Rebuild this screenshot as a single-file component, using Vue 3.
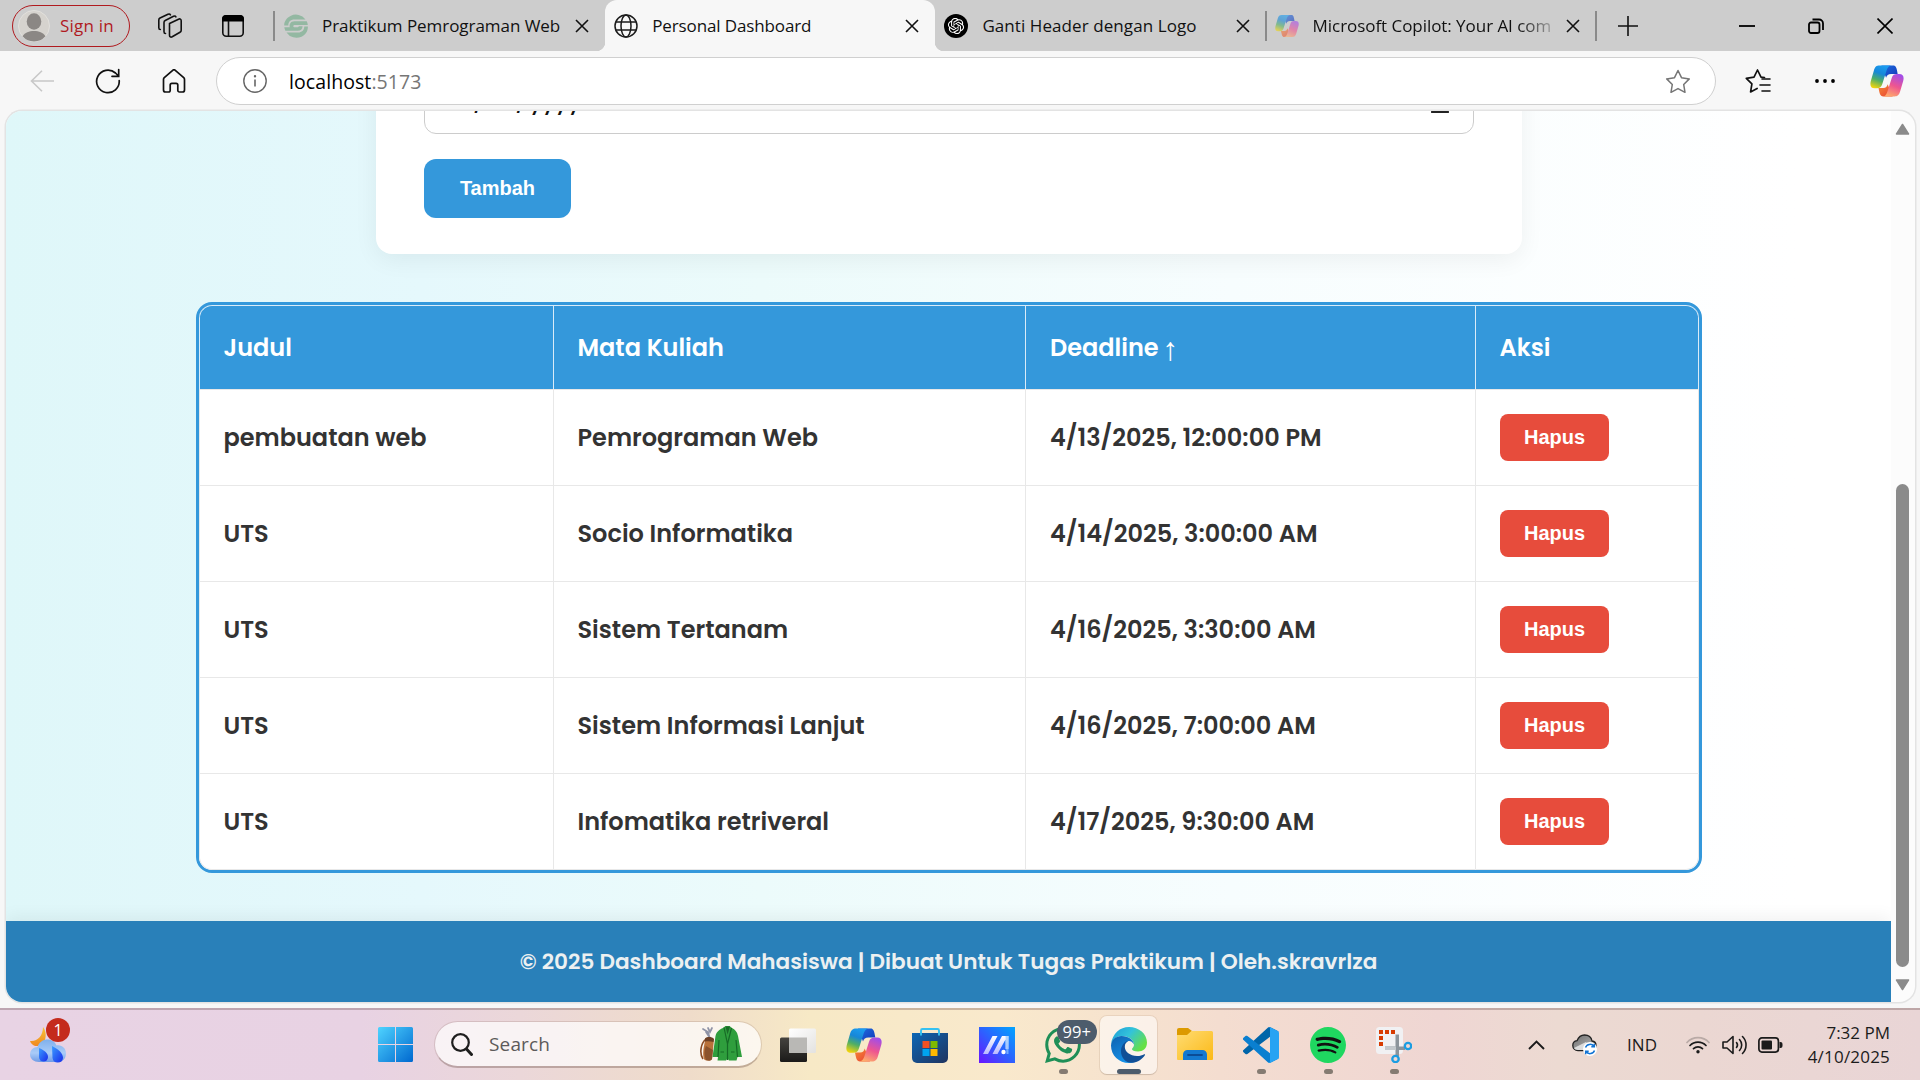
<script setup>
const tabs = [
  { title: 'Praktikum Pemrograman Web', icon: 'praktikum' },
  { title: 'Personal Dashboard', icon: 'globe', active: true },
  { title: 'Ganti Header dengan Logo', icon: 'knot', wide: true },
  { title: 'Microsoft Copilot: Your AI com', icon: 'copilot', faded: true, divider: true }
]

const headers = ['Judul', 'Mata Kuliah', 'Deadline', 'Aksi']

const tasks = [
  { judul: 'pembuatan web', matkul: 'Pemrograman Web', deadline: '4/13/2025, 12:00:00 PM' },
  { judul: 'UTS', matkul: 'Socio Informatika', deadline: '4/14/2025, 3:00:00 AM' },
  { judul: 'UTS', matkul: 'Sistem Tertanam', deadline: '4/16/2025, 3:30:00 AM' },
  { judul: 'UTS', matkul: 'Sistem Informasi Lanjut', deadline: '4/16/2025, 7:00:00 AM' },
  { judul: 'UTS', matkul: 'Infomatika retriveral', deadline: '4/17/2025, 9:30:00 AM' }
]
</script>

<template>
  <div class="desktop">
    <svg class="sprite" aria-hidden="true">
      <defs>
        <linearGradient id="cpA" x1=".6" y1="0" x2=".25" y2="1">
          <stop offset="0" stop-color="#1a9cf0" /><stop offset=".35" stop-color="#1787d8" />
          <stop offset=".65" stop-color="#4fae66" /><stop offset="1" stop-color="#f0d40c" />
        </linearGradient>
        <linearGradient id="cpB" x1="0" y1="0" x2="1" y2="1">
          <stop offset="0" stop-color="#1d6fe0" /><stop offset="1" stop-color="#1336b8" />
        </linearGradient>
        <linearGradient id="cpC" x1=".7" y1="0" x2=".3" y2="1">
          <stop offset="0" stop-color="#a24de8" /><stop offset=".5" stop-color="#ee5590" />
          <stop offset="1" stop-color="#ffae6a" />
        </linearGradient>
        <linearGradient id="cpD" x1="0" y1="0" x2="1" y2="1">
          <stop offset="0" stop-color="#f58a35" /><stop offset="1" stop-color="#e83f35" />
        </linearGradient>
        <linearGradient id="win" x1="0" y1="0" x2="1" y2="1">
          <stop offset="0" stop-color="#4fd4ff" /><stop offset="1" stop-color="#0068cf" />
        </linearGradient>
        <linearGradient id="store" x1="0" y1="0" x2="1" y2="1">
          <stop offset="0" stop-color="#0c66b5" /><stop offset="1" stop-color="#20345f" />
        </linearGradient>
        <linearGradient id="asus" x1="0" y1="1" x2="1" y2="0">
          <stop offset="0" stop-color="#6a14ff" /><stop offset=".5" stop-color="#2c62ff" /><stop offset="1" stop-color="#00a5ff" />
        </linearGradient>
        <linearGradient id="asusM" x1="0" y1="0" x2="0" y2="1">
          <stop offset="0" stop-color="#fff" /><stop offset="1" stop-color="#b9b8ff" />
        </linearGradient>
        <linearGradient id="edTop" x1="0" y1="0" x2="1" y2=".6">
          <stop offset="0" stop-color="#1c9ad8" /><stop offset=".5" stop-color="#33c3da" /><stop offset="1" stop-color="#66e045" />
        </linearGradient>
        <linearGradient id="edMid" x1="0" y1="0" x2=".5" y2="1">
          <stop offset="0" stop-color="#0f62b0" /><stop offset="1" stop-color="#1690e6" />
        </linearGradient>
        <linearGradient id="folder" x1="0" y1="0" x2="1" y2="1">
          <stop offset="0" stop-color="#ffdc73" /><stop offset="1" stop-color="#fbb917" />
        </linearGradient>
        <linearGradient id="drop" x1="0" y1="0" x2="1" y2="1">
          <stop offset="0" stop-color="#3a9cff" /><stop offset="1" stop-color="#1a2bea" />
        </linearGradient>
        <linearGradient id="puff" x1="0" y1="0" x2="0" y2="1">
          <stop offset="0" stop-color="#7fb0ec" /><stop offset=".6" stop-color="#a9cbf8" /><stop offset="1" stop-color="#6f9be6" />
        </linearGradient>
        <linearGradient id="moon" x1="0" y1="0" x2="0" y2="1">
          <stop offset="0" stop-color="#f6c63a" /><stop offset="1" stop-color="#f0881f" />
        </linearGradient>
        <linearGradient id="tvDark" x1="0" y1="0" x2="0" y2="1">
          <stop offset="0" stop-color="#45433f" /><stop offset="1" stop-color="#1b1a19" />
        </linearGradient>
        <linearGradient id="tvLight" x1="0" y1="0" x2="1" y2="1">
          <stop offset="0" stop-color="#fff" /><stop offset="1" stop-color="#e3e2e0" />
        </linearGradient>
        <linearGradient id="cloudG" x1="0" y1="0" x2="1" y2="1">
          <stop offset="0" stop-color="#6d6d6d" /><stop offset="1" stop-color="#bdbdbd" />
        </linearGradient>
        <symbol id="copilot" viewBox="0 0 36 34">
          <path fill="url(#cpB)" d="M12 .5h12.500c3 0 3.800 2.500 4.800 9h-7c-3 0-4.500 1.500-5.300 4z" />
          <path fill="url(#cpD)" d="M9 24.500h5c3 0 4-1.500 4.700-4l5.300 13H14c-3.500 0-4-4-5-9z" />
          <path fill="url(#cpA)" d="M10 .5h13.500c-4 0-5 2.500-6.300 6.500l-4.300 13.500c-1 3-2.500 4.300-5.500 4.300H5C.5 24.800-.3 21.500.8 17L4 6C5.200 1.800 6.800.5 10 .5z" />
          <path fill="url(#cpC)" d="M26 33.500H12.500c4 0 5-2.500 6.300-6.500l4.300-13.500c1-3 2.500-4 5.500-4H31c4.500 0 5.300 3.300 4.200 7.500L32 28c-1.200 4.200-2.800 5.500-6 5.500z" />
        </symbol>
        <symbol id="globe" viewBox="0 0 24 24">
          <g fill="none" stroke="#1b1b1b" stroke-width="1.500">
            <circle cx="12" cy="12" r="11" /><ellipse cx="12" cy="12" rx="5" ry="11" />
            <path d="M2 8h20M2 16h20" />
          </g>
        </symbol>
        <symbol id="praktikum" viewBox="0 0 24 24">
          <g fill="#93b8a2">
            <path d="M6.500 2A11.700 11.700 0 0 1 21.500 5.400H10.500C6.500 5.400 4.300 7.500 4.300 11.500H.2C.2 7 3 3.500 6.500 2z" />
            <path d="M10.500 7.200h12.200c.6 1.200 1 2.500 1.100 3.800H11c-1.200 0-1.700.5-1.700 1.200 0 .6.500 1 1.400 1h2.500c1 0 1.500-.5 1.700-1h3.700c-.2 3-2 4.600-5 4.600H1.400A12 12 0 0 1 .3 13.200h5.500c-.8-3 .8-6 4.700-6z" />
            <path d="M2.500 18.500H14c4 0 6.200-2.300 6.300-6h3.600C24 17 21.500 21 17.500 22.700A12 12 0 0 1 2.500 18.500z" />
          </g>
        </symbol>
        <symbol id="knot" viewBox="0 0 24 24">
          <circle cx="12" cy="12" r="12" fill="#000" />
          <path fill="#fff" transform="translate(3.900 3.900) scale(.675)" d="M22.2819 9.8211a5.9847 5.9847 0 0 0-.5157-4.9108 6.0462 6.0462 0 0 0-6.5098-2.9A6.0651 6.0651 0 0 0 4.9807 4.1818a5.9847 5.9847 0 0 0-3.9977 2.9 6.0462 6.0462 0 0 0 .7427 7.0966 5.98 5.98 0 0 0 .511 4.9107 6.051 6.051 0 0 0 6.5146 2.9001A5.9847 5.9847 0 0 0 13.2599 24a6.0557 6.0557 0 0 0 5.7718-4.2058 5.9894 5.9894 0 0 0 3.9977-2.9001 6.0557 6.0557 0 0 0-.7475-7.0729zm-9.022 12.6081a4.4755 4.4755 0 0 1-2.8764-1.0408l.1419-.0804 4.7783-2.7582a.7948.7948 0 0 0 .3927-.6813v-6.7369l2.02 1.1686a.071.071 0 0 1 .038.052v5.5826a4.504 4.504 0 0 1-4.4945 4.4944zm-9.6607-4.1254a4.4708 4.4708 0 0 1-.5346-3.0137l.142.0852 4.783 2.7582a.7712.7712 0 0 0 .7806 0l5.8428-3.3685v2.3324a.0804.0804 0 0 1-.0332.0615L9.74 19.9502a4.4992 4.4992 0 0 1-6.1408-1.6464zM2.3408 7.8956a4.485 4.485 0 0 1 2.3655-1.9728V11.6a.7664.7664 0 0 0 .3879.6765l5.8144 3.3543-2.0201 1.1685a.0757.0757 0 0 1-.071 0l-4.8303-2.7865A4.504 4.504 0 0 1 2.3408 7.872zm16.5963 3.8558L13.1038 8.364 15.1192 7.2a.0757.0757 0 0 1 .071 0l4.8303 2.7913a4.4944 4.4944 0 0 1-.6765 8.1042v-5.6772a.79.79 0 0 0-.407-.667zm2.0107-3.0231l-.142-.0852-4.7735-2.7818a.7759.7759 0 0 0-.7854 0L9.409 9.2297V6.8974a.0662.0662 0 0 1 .0284-.0615l4.8303-2.7866a4.4992 4.4992 0 0 1 6.6802 4.66zM8.3065 12.863l-2.02-1.1638a.0804.0804 0 0 1-.038-.0567V6.0742a4.4992 4.4992 0 0 1 7.3757-3.4537l-.142.0805L8.704 5.459a.7948.7948 0 0 0-.3927.6813zm1.0976-2.3654l2.602-1.4998 2.6069 1.4998v2.9994l-2.5974 1.4997-2.6067-1.4997Z" />
        </symbol>
      </defs>
    </svg>

    <!-- Browser title bar -->
    <header class="titlebar">
      <div class="signin">
        <svg width="32" height="32" viewBox="0 0 32 32">
          <circle cx="16" cy="16" r="15.500" fill="#d6d3ce" stroke="#e2e0dc" />
          <ellipse cx="16" cy="11.500" rx="7.300" ry="8.300" fill="#8b8784" />
          <path d="M4.500 26.300C7 22.500 11 21 16 21s9 1.500 11.500 5.300A15.500 15.500 0 0 1 16 31.500 15.500 15.500 0 0 1 4.500 26.300z" fill="#8b8784" />
        </svg>
        <span>Sign in</span>
      </div>
      <svg class="tool-a" width="26" height="26" viewBox="0 0 26 26" fill="none" stroke="#111" stroke-width="1.600" stroke-linejoin="round" stroke-linecap="round">
        <path d="M12.500 10.500l9-4.300c1.500-.7 2.700 0 2.700 1.500v9.500c0 1-.4 1.600-1.200 2l-7.800 4.600c-1.500.8-2.700 0-2.700-1.500z" />
        <path d="M8.500 20.500c-1 0-1.500-.6-1.500-1.700V9.500c0-1 .4-1.600 1.200-2l8.300-4.200c1-.4 2-.2 2.400.6" />
        <path d="M3.300 16.500c-1 0-1.500-.6-1.500-1.700V7c0-1 .4-1.600 1.200-2l8-3.800c1-.4 2-.2 2.400.6" />
      </svg>
      <svg class="tool-b" width="22" height="22" viewBox="0 0 22 22">
        <rect x=".8" y=".8" width="20.400" height="20.400" rx="3.500" fill="none" stroke="#111" stroke-width="1.600" />
        <path d="M0 6.500V4a4 4 0 0 1 4-4h14a4 4 0 0 1 4 4v2.500z" fill="#000" />
        <path d="M6.500 6v15" stroke="#111" stroke-width="1.600" />
      </svg>
      <i class="sep"></i>
      <div v-for="t in tabs" :key="t.title" class="tab" :class="{ active: t.active, faded: t.faded, wide: t.wide }">
        <svg class="favicon"><use :href="'#' + t.icon" /></svg>
        <span class="tab-title">{{ t.title }}</span>
        <svg class="close" viewBox="0 0 14 14"><path d="M1 1l12 12M13 1L1 13" stroke="#111" stroke-width="1.600" /></svg>
        <i v-if="t.divider" class="divider"></i>
      </div>
      <i class="sep end"></i>
      <svg class="plus" width="20" height="20" viewBox="0 0 20 20"><path d="M10 0v20M0 10h20" stroke="#111" stroke-width="1.600" /></svg>
      <div class="window-buttons">
        <svg width="16" height="16" viewBox="0 0 16 16"><path d="M0 8h16" stroke="#000" stroke-width="1.800" /></svg>
        <svg width="16" height="16" viewBox="0 0 16 16" fill="none" stroke="#000" stroke-width="1.800">
          <rect x="1" y="4.500" width="10.500" height="10.500" rx="2" /><path d="M4.500 1.500H11a4 4 0 0 1 4 4V12" />
        </svg>
        <svg width="16" height="16" viewBox="0 0 16 16"><path d="M.5.5l15 15M15.500.5l-15 15" stroke="#000" stroke-width="1.600" /></svg>
      </div>
    </header>

    <!-- Address bar -->
    <div class="toolbar">
      <svg width="24" height="22" viewBox="0 0 24 22" fill="none" stroke="#c8c8c8" stroke-width="1.600"><path d="M24 11H1.500M12 .7L1.500 11 12 21.300" /></svg>
      <svg class="nav" width="26" height="26" viewBox="0 0 26 26" fill="none" stroke="#111" stroke-width="1.700" stroke-linecap="round">
        <path d="M24.200 12.500A11.300 11.300 0 1 1 20.500 5L23.500 8M23.700 1.500V8.300H17" />
      </svg>
      <svg class="nav" width="24" height="24" viewBox="0 0 24 24" fill="none" stroke="#111" stroke-width="1.700" stroke-linejoin="round">
        <path d="M1.500 10.500c0-.8.300-1.300.8-1.800L10.700 1.300a2 2 0 0 1 2.600 0l8.400 7.400c.5.500.8 1 .8 1.800V21c0 1.200-.8 2-2 2h-3c-1 0-1.700-.8-1.700-1.700V16c0-1-.7-1.700-1.700-1.700h-4.200c-1 0-1.700.7-1.700 1.700v5.300c0 .9-.7 1.700-1.700 1.700h-3c-1.200 0-2-.8-2-2z" />
      </svg>
      <div class="address">
        <svg width="24" height="24" viewBox="0 0 24 24"><circle cx="12" cy="12" r="11.200" fill="none" stroke="#666" stroke-width="1.400" /><path d="M12 10.500v7" stroke="#666" stroke-width="1.600" /><circle cx="12" cy="7.300" r="1.200" fill="#666" /></svg>
        <span class="url">localhost<em>:5173</em></span>
        <svg width="26" height="25" viewBox="0 0 26 25" fill="none" stroke="#757575" stroke-width="1.500" stroke-linejoin="round"><path d="M13 1.500l3.500 7.200 7.800 1.200-5.600 5.600 1.300 7.800L13 19.600l-7 3.700 1.300-7.800L1.700 9.900l7.800-1.200z" /></svg>
      </div>
      <svg class="favs" width="26" height="25" viewBox="0 0 26 25" fill="none" stroke="#111" stroke-width="1.700" stroke-linejoin="round" stroke-linecap="round">
        <path d="M19.500 8.500l-3.500-.3L12.500 1 9 8.200l-7.700 1.200 5.600 5.500-1.300 8 6.500-3.400" /><path d="M17 10h8M15 16h10M17 22h8" stroke-width="1.600" />
      </svg>
      <svg class="dots" width="22" height="6" viewBox="0 0 22 6"><circle cx="3" cy="3" r="1.900" /><circle cx="11" cy="3" r="1.900" /><circle cx="19" cy="3" r="1.900" /></svg>
      <svg class="copilot-btn" width="34" height="32"><use href="#copilot" /></svg>
    </div>

    <!-- Web page -->
    <div class="frame">
      <div class="viewport">
        <section class="form-card">
          <div class="date-input">
            <span>mm/</span><span class="day">dd/</span><span class="year">yyyy</span>
            <svg width="18" height="20" viewBox="0 0 18 20"><path d="M1 3h16v16H1zM1 7h16" fill="none" stroke="#222" stroke-width="1.800" /></svg>
          </div>
          <button class="add">Tambah</button>
        </section>

        <section class="table">
          <div class="row head">
            <div v-for="h in headers" :key="h" class="cell">
              {{ h }}<span v-if="h === 'Deadline'" class="arrow">↑</span>
            </div>
          </div>
          <div v-for="(t, i) in tasks" :key="i" class="row">
            <div class="cell">{{ t.judul }}</div>
            <div class="cell">{{ t.matkul }}</div>
            <div class="cell">{{ t.deadline }}</div>
            <div class="cell"><button class="delete">Hapus</button></div>
          </div>
        </section>

        <footer class="footer">© 2025 Dashboard Mahasiswa | Dibuat Untuk Tugas Praktikum | Oleh.skravrlza</footer>
      </div>
      <div class="scrollbar">
        <svg width="15" height="12" viewBox="0 0 15 12"><path d="M7.500 1.500L13.500 11h-12z" fill="#8b8b8b" stroke="#8b8b8b" stroke-width="1.500" stroke-linejoin="round" /></svg>
        <i class="thumb"></i>
        <svg width="15" height="12" viewBox="0 0 15 12"><path d="M7.500 10.500L13.500 1h-12z" fill="#8b8b8b" stroke="#8b8b8b" stroke-width="1.500" stroke-linejoin="round" /></svg>
      </div>
    </div>

    <!-- Taskbar -->
    <div class="taskbar">
      <div class="weather">
        <svg width="38" height="38" viewBox="0 0 38 38">
          <path d="M14 1c5 6 3 18-5 19-4 .5-7-2-8-5 7 1 13-5 13-14z" fill="url(#moon)" />
          <path d="M10 36c-5 0-9-3-9-7.500S4.500 21 8.500 21C10 16 14 13.500 18.500 13.500S26 16 27.500 19.500C33 18.500 37 22.500 37 27.500S33.500 36 28.500 36z" fill="url(#puff)" />
          <path d="M10 22c5 2 9 5 9 9a4.500 4.500 0 0 1-9 0z" fill="url(#drop)" /><path d="M23 20c6 3 11 7 11 12a5.300 5.300 0 0 1-10.500 0z" fill="url(#drop)" />
        </svg>
        <b>1</b>
      </div>
      <svg class="start" width="35" height="35" viewBox="0 0 35 35">
        <path fill="url(#win)" d="M1.500 0H17v17H0V1.500A1.500 1.500 0 0 1 1.500 0zM18 0h15.500A1.500 1.500 0 0 1 35 1.500V17H18zM0 18h17v17H1.500A1.500 1.500 0 0 1 0 33.500zM18 18h17v15.500a1.500 1.500 0 0 1-1.500 1.500H18z" />
      </svg>
      <div class="search">
        <svg width="22" height="23" viewBox="0 0 22 23" fill="none" stroke="#1e1e1e"><circle cx="9.500" cy="9.500" r="8.300" stroke-width="2.200" /><path d="M15.500 16l5 5.500" stroke-width="3" stroke-linecap="round" /></svg>
        <span>Search</span>
        <svg width="42" height="36" viewBox="0 0 42 36">
          <path d="M3 3l5 3 2 7M8 2l2 4 2-4M6 6l4 6" fill="none" stroke="#8f93a6" stroke-width="1.700" stroke-linecap="round" />
          <path d="M6 13C1 17-1 27 3 33" fill="none" stroke="#8a4b25" stroke-width="1.600" />
          <path d="M6 12l8 1-2 20c-1 2-7 2-8 0-2-5 0-15 2-21z" fill="#b9713a" /><path d="M5 12.500c2-2 7-2 9 .5l-.5 3c-3-1-6-1-8.500-.5z" fill="#6d4026" />
          <path d="M6 20c-2 4-2 10 0 14 3 1 5 1 6-1l1-9" fill="#8b522c" />
          <path d="M23 2l2.500-2h4L32 2c3 1.500 5 3.500 6 8l4 21h-4.500l-1 3.500H29l-1.500-2-1.500 2h-8.500l.5-3.500h-5.500L15.500 10c1-4.500 4-6.500 7.500-8z" fill="#2f9e3d" />
          <path d="M24 1.500l3.500 16.500L31.500 2M27.500 18v16M19 14l-1 17M36 14l1.500 17M20.500 26H24M31 26h3.500" fill="none" stroke="#166a26" stroke-width="1.200" />
          <path d="M25.500 .5h4.500l-2.500 8z" fill="#1b6a28" />
        </svg>
      </div>
      <div class="apps">
        <div class="app"><svg width="36" height="34" viewBox="0 0 36 34"><rect y="9.500" width="27" height="24.500" rx="1.500" fill="url(#tvDark)" /><rect x="9" y=".5" width="27" height="24.500" rx="1.500" fill="url(#tvLight)" /><path d="M9 9.500h18V25H10.500A1.500 1.500 0 0 1 9 23.500z" fill="#b9b8b5" /></svg></div>
        <div class="app"><svg width="36" height="34"><use href="#copilot" /></svg></div>
        <div class="app">
          <svg width="36" height="36" viewBox="0 0 36 36">
            <path d="M0 6h36v25a5 5 0 0 1-5 5H5a5 5 0 0 1-5-5z" fill="url(#store)" /><path d="M9 8.500V3.500A1.500 1.500 0 0 1 10.500 2h15A1.500 1.500 0 0 1 27 3.500v5" fill="none" stroke="#35c1f1" stroke-width="1.900" />
            <path d="M10.500 14h7v7h-7z" fill="#f25022" /><path d="M18.500 14h7v7h-7z" fill="#7fba00" /><path d="M10.500 22h7v7h-7z" fill="#00a4ef" /><path d="M18.500 22h7v7h-7z" fill="#ffb900" />
          </svg>
        </div>
        <div class="app">
          <svg width="36" height="36" viewBox="0 0 36 36"><rect width="36" height="36" fill="url(#asus)" /><path d="M4 27L13.500 9h5L9 27zM13.500 27L23 9h6.500v13h-3v-9.500L18.500 27z" fill="url(#asusM)" /><path d="M26.500 9h3v18h-2z" fill="#8fc4ff" opacity=".7" /><circle cx="24.500" cy="25" r="2.200" fill="#fff" /></svg>
        </div>
        <div class="app open">
          <svg width="36" height="36" viewBox="0 0 24 24"><path fill="#1f8f57" d="M17.472 14.382c-.297-.149-1.758-.867-2.03-.967-.273-.099-.471-.148-.67.15-.197.297-.767.966-.94 1.164-.173.199-.347.223-.644.075-.297-.15-1.255-.463-2.39-1.475-.883-.788-1.48-1.761-1.653-2.059-.173-.297-.018-.458.13-.606.134-.133.298-.347.446-.52.149-.174.198-.298.298-.497.099-.198.05-.371-.025-.52-.075-.149-.669-1.612-.916-2.207-.242-.579-.487-.5-.669-.51-.173-.008-.371-.01-.57-.01-.198 0-.52.074-.792.372-.272.297-1.04 1.016-1.04 2.479 0 1.462 1.065 2.875 1.213 3.074.149.198 2.096 3.2 5.077 4.487.709.306 1.262.489 1.694.625.712.227 1.36.195 1.871.118.571-.085 1.758-.719 2.006-1.413.248-.694.248-1.289.173-1.413-.074-.124-.272-.198-.57-.347m-5.421 7.403h-.004a9.87 9.87 0 01-5.031-1.378l-.361-.214-3.741.982.998-3.648-.235-.374a9.86 9.86 0 01-1.51-5.26c.001-5.45 4.436-9.884 9.888-9.884 2.64 0 5.122 1.03 6.988 2.898a9.825 9.825 0 012.893 6.994c-.003 5.45-4.437 9.884-9.885 9.884m8.413-18.297A11.815 11.815 0 0012.05 0C5.495 0 .16 5.335.157 11.892c0 2.096.547 4.142 1.588 5.945L.057 24l6.305-1.654a11.882 11.882 0 005.683 1.448h.005c6.554 0 11.89-5.335 11.893-11.893a11.821 11.821 0 00-3.48-8.413Z" /></svg>
          <b class="count">99+</b>
        </div>
        <div class="app open current">
          <svg width="36" height="36" viewBox="0 0 36 36">
            <path fill="url(#edTop)" d="M0 17C1.500 6.500 9 0 18 0c10 0 18 7 18 15.500 0 6-4 9-9 9-4 0-6-1.200-6-2.200 0-1.200 2-1.800 2-4.800-.5-4.500-5-8.500-12-8.500C6 9 2 12 0 17z" />
            <path fill="url(#edMid)" d="M0 18.500C.5 12.500 5 9 10.500 9c7 0 12 4 12.500 8.500-1.500-2.800-3.500-3.700-5.500-3.500C13 16 12 21 13 25c1.500 5 6 8.500 11 10-2 .8-4 1-6 1C8 36 0 28.500 0 18.500z" />
            <path fill="#114f96" d="M17 14c-4 1-7 5-7 10 0 7 5 12 11 11.800 6-.5 10.500-3.800 13-7.800.3-.7 0-1-.7-.8-2.300 1.300-4.800 1.900-7.300 1.800-7-.3-12-4-12.200-9-.1-3 1.200-5 3.200-6z" />
          </svg>
        </div>
        <div class="app">
          <svg width="36" height="34" viewBox="0 0 36 34"><path d="M0 2a2 2 0 0 1 2-2h9l4 3-4 5H0z" fill="#dc9a00" /><path d="M0 7h10l4.500-4H34.500A1.500 1.500 0 0 1 36 4.500V31a1 1 0 0 1-1 1H1a1 1 0 0 1-1-1z" fill="url(#folder)" /><path d="M6 32v-5.500a4.500 4.500 0 0 1 4.500-4.500h15a4.500 4.500 0 0 1 4.500 4.500V32z" fill="#1379d0" /><path d="M11 27h14" stroke="#0b4c96" stroke-width="1.800" stroke-linecap="round" /></svg>
        </div>
        <div class="app open">
          <svg width="36" height="36" viewBox="0 0 100 100">
            <path d="M96.500 10.800L75.900.9a6.200 6.200 0 0 0-7.100 1.200L1.400 63.600a4.200 4.200 0 0 0 0 6.200l5.500 5c1.500 1.400 3.700 1.500 5.300.3L93.400 13.500c2.700-2.100 6.600-.1 6.600 3.300v-.3c0-2.400-1.400-4.600-3.500-5.700z" fill="#0065a9" />
            <path d="M96.500 89.200l-20.600 9.900a6.200 6.200 0 0 1-7.100-1.200L1.400 36.400a4.200 4.200 0 0 1 0-6.200l5.500-5c1.500-1.400 3.700-1.500 5.300-.3l81.200 61.600c2.700 2.100 6.600.1 6.600-3.300v.3c0 2.400-1.400 4.600-3.500 5.700z" fill="#0a7fd0" />
            <path d="M75.900 99.100a6.200 6.200 0 0 1-7.100-1.200c2.300 2.300 6.200.7 6.200-2.600V4.700c0-3.300-3.900-4.900-6.200-2.600A6.200 6.200 0 0 1 75.900.9l20.600 9.900a6.200 6.200 0 0 1 3.500 5.600v67.200c0 2.400-1.400 4.600-3.500 5.600z" fill="#27a3f3" />
          </svg>
        </div>
        <div class="app open">
          <svg width="36" height="36" viewBox="0 0 24 24"><circle cx="12" cy="12" r="11" fill="#111" /><path fill="#1fd760" d="M12 0C5.400 0 0 5.400 0 12s5.400 12 12 12 12-5.400 12-12S18.660 0 12 0zm5.521 17.340c-.24.359-.66.480-1.021.240-2.820-1.740-6.360-2.101-10.561-1.141-.418.122-.779-.179-.899-.539-.12-.421.180-.780.540-.900 4.560-1.021 8.520-.600 11.640 1.320.420.180.479.659.301 1.020zm1.440-3.300c-.301.420-.841.600-1.262.300-3.239-1.980-8.159-2.580-11.939-1.380-.479.120-1.020-.120-1.140-.600-.120-.480.120-1.021.600-1.141C9.600 9.900 15 10.561 18.720 12.840c.361.181.540.780.241 1.200zm.120-3.360C15.240 8.400 8.820 8.160 5.160 9.301c-.600.179-1.200-.181-1.380-.721-.180-.601.180-1.200.720-1.381 4.260-1.260 11.280-1.020 15.721 1.621.539.300.719 1.020.419 1.560-.299.421-1.020.599-1.559.300z" /></svg>
        </div>
        <div class="app open">
          <svg width="36" height="36" viewBox="0 0 36 36">
            <rect width="27" height="27" rx="3.500" fill="#f1f1f3" />
            <path d="M3 3h4v4H3zM9 3h4v4H9zM15 3h4v4h-4zM3 9h4v4H3zM3 15h4v4H3z" fill="#d83b01" />
            <path d="M19.500 7.500h3.500v22h-3.500zM9 19.500h20V23H9z" fill="#8c949b" /><path d="M9 19.500h11V23H9z" fill="#c3c8cc" />
            <circle cx="32" cy="19" r="3.200" fill="none" stroke="#1b9de2" stroke-width="2.300" /><circle cx="19.500" cy="32" r="3.200" fill="none" stroke="#1b9de2" stroke-width="2.300" />
          </svg>
        </div>
      </div>
      <div class="tray">
        <svg width="17" height="10" viewBox="0 0 17 10"><path d="M1 9l7.500-7.500L16 9" fill="none" stroke="#1b1b1b" stroke-width="1.900" /></svg>
        <svg class="cloud" width="25" height="22" viewBox="0 0 25 22">
          <path d="M6 16.500c-3 0-5.200-2-5.200-5C.8 9 2.500 7 5 6.700 6.500 3 9 1 12.500 1c4 0 6.800 2.300 7.500 6 2.500.3 4 2 4 4.500 0 3-2 5-5 5z" fill="url(#cloudG)" stroke="#222" stroke-width="1.300" />
          <path d="M2 14l12-6 6 8H6c-2 0-3.500-.8-4-2z" fill="#dcdcdc" /><circle cx="18" cy="15" r="7" fill="#fff" />
          <path d="M13.500 13.500a4.800 4.800 0 0 1 8.500-1M22.500 16.500a4.800 4.800 0 0 1-8.500 1M22.300 9.800v3h-3M13.700 20.200v-3h3" fill="none" stroke="#1173d4" stroke-width="1.500" />
        </svg>
        <span class="lang">IND</span>
        <svg class="wifi" width="24" height="18" viewBox="0 0 24 18" fill="none" stroke="#1b1b1b" stroke-width="1.700" stroke-linecap="round">
          <path d="M1 6.500a15 15 0 0 1 22 0" stroke="#b9aaa6" /><path d="M4 9.500a11 11 0 0 1 16 0M7.500 12.700a6.500 6.500 0 0 1 9 0" /><circle cx="12" cy="15.700" r="1.700" fill="#1b1b1b" stroke="none" />
        </svg>
        <svg class="vol" width="25" height="20" viewBox="0 0 25 20" fill="none" stroke="#1b1b1b" stroke-width="1.600" stroke-linecap="round" stroke-linejoin="round">
          <path d="M1 7h4l6-5.500v17L5 13H1zM14.500 7.500a4 4 0 0 1 0 5M17.500 4.500a8 8 0 0 1 0 11M20.500 1.500a12 12 0 0 1 0 17" />
        </svg>
        <svg class="bat" width="25" height="16" viewBox="0 0 25 16"><rect x=".9" y=".9" width="19.500" height="14.200" rx="3" fill="none" stroke="#1b1b1b" stroke-width="1.700" /><rect x="3.500" y="3.500" width="10.500" height="9" rx="1" fill="#1b1b1b" /><path d="M21.500 5h1a2 2 0 0 1 2 2v2a2 2 0 0 1-2 2h-1z" fill="#1b1b1b" /></svg>
        <div class="clock"><span>7:32 PM</span><span class="date">4/10/2025</span></div>
      </div>
    </div>
  </div>
</template>

<style>
body { margin: 0; overflow: hidden; }
</style>

<style scoped>
.desktop { width: 1920px; height: 1080px; display: flex; flex-direction: column; overflow: hidden; background: #f7f7f7; font-family: "Segoe UI", "Open Sans", "Noto Sans", sans-serif; color: #111; }
.desktop * { box-sizing: border-box; }
svg { display: block; flex: none; }
.sprite { position: absolute; width: 0; height: 0; }

.titlebar { height: 51px; flex: none; display: flex; align-items: center; background: #cdcdcd; }
.signin { width: 118px; height: 42px; margin-left: 12px; padding-left: 5px; border: 1.5px solid #b01a1f; border-radius: 21px; display: flex; align-items: center; gap: 10px; font-size: 17px; letter-spacing: .2px; color: #b01a1f; white-space: nowrap; }
.tool-a { margin-left: 27px; }
.tool-b { margin-left: 39px; }
.sep { width: 2px; height: 30px; margin-left: 29px; background: #8a8a8a; flex: none; }
.tab { position: relative; width: 330.2px; height: 51px; flex: none; display: flex; align-items: center; padding: 0 16px 0 9px; font-size: 17px; }
.favicon { width: 24px; height: 24px; margin-right: 14px; }
.tab-title { flex: 1; white-space: nowrap; line-height: 28px; letter-spacing: -.05px; }
.active .tab-title { letter-spacing: -.12px; }
.wide .tab-title { letter-spacing: .08px; }
.close { width: 14px; height: 14px; margin-left: 12px; }
.faded .favicon { opacity: .6; }
.faded .tab-title { -webkit-mask-image: linear-gradient(90deg, #000 205px, rgba(0, 0, 0, .2) 240px); mask-image: linear-gradient(90deg, #000 205px, rgba(0, 0, 0, .2) 240px); }
.divider { position: absolute; left: -1px; top: 11px; width: 2px; height: 30px; background: #8a8a8a; }
.active { background: #f7f7f7; border-radius: 12px 12px 0 0; }
.active::before, .active::after { content: ""; position: absolute; bottom: 0; width: 9px; height: 9px; }
.active::before { left: -9px; background: radial-gradient(circle at 0 0, transparent 9px, #f7f7f7 9.5px); }
.active::after { right: -9px; background: radial-gradient(circle at 100% 0, transparent 9px, #f7f7f7 9.5px); }
.end { margin-left: -1px; }
.plus { margin-left: 21px; }
.window-buttons { margin-left: auto; margin-right: 27px; display: flex; gap: 53px; }

.toolbar { height: 60px; flex: none; display: flex; align-items: center; padding: 0 16px 0 30px; }
.nav { margin-left: 41px; }
.address { width: 1500px; height: 48px; margin-left: 30px; padding: 0 24px 0 26px; display: flex; align-items: center; background: #fff; border: 1.5px solid #d0d0d0; border-radius: 24px; font-size: 19.500px; }
.url { flex: 1; margin-left: 22px; color: #000; letter-spacing: .08px; }
.url em { font-style: normal; color: #767676; }
.favs { margin-left: 29px; }
.dots { margin-left: 43px; }
.copilot-btn { margin-left: auto; }

.frame { height: 891px; margin: 0 5px 0 6px; flex: none; display: flex; overflow: hidden; border-radius: 16px; background: #fcfcfc; box-shadow: 0 0 0 1.5px #e3e3e3; }
.viewport { width: 1885px; display: flex; flex-direction: column; align-items: center; overflow: hidden; background: linear-gradient(90deg, #dff7f9 0%, #e5f8fc 22%, #ecfbfb 40%, #f7fdfe 65%, #fff 95%); font-family: Poppins, Inter, "Open Sans", sans-serif; }
.form-card { width: 1146px; height: 203px; margin-top: -60px; padding: 23px 48px 0; flex: none; background: #fff; border-radius: 16px; box-shadow: 0 6px 24px rgba(0, 0, 0, .06); }
.date-input { height: 60px; display: flex; align-items: center; border: 1.5px solid #ccc; border-radius: 12px; padding: 0 24px 5px 5px; font-size: 21px; font-weight: 500; color: #111; }
.day { letter-spacing: 1.5px; }
.year { margin-left: 2px; font-size: 22px; }
.date-input svg { margin: 2px 0 0 auto; }
.add { width: 147px; height: 59px; margin-top: 25px; padding: 0 0 0 1px; display: block; border: 0; border-radius: 12px; background: #3498db; color: #fff; font: 700 20px "Liberation Sans", Arial, sans-serif; }
.table { width: 1506px; height: 571px; margin-top: 48px; flex: none; border: 3px solid #3498db; border-radius: 16px; overflow: hidden; background: #fff; }
.row { display: grid; grid-template-columns: 354px 472px 450px 224px; height: 96px; }
.row:last-child { height: 97px; }
.cell { display: flex; align-items: center; padding-left: 24px; border: 0 solid #e8e8e8; border-width: 1px 0 0 1px; font-size: 24px; font-weight: 600; color: #333; white-space: nowrap; }
.cell:nth-child(3) { padding-left: 24.500px; }
.cell:last-child { border-right-width: 1px; }
.row:last-child .cell { border-bottom-width: 1px; }
.head { height: 84px; background: #3498db; }
.head .cell { color: #fff; border-color: #d9ebf8; }
.head .cell:first-child { border-top-left-radius: 13px; }
.head .cell:last-child { border-top-right-radius: 13px; }
.row:last-child .cell:first-child { border-bottom-left-radius: 13px; }
.row:last-child .cell:last-child { border-bottom-right-radius: 13px; }
.arrow { margin: 3px 0 0 4px; font-family: "Liberation Serif", serif; font-weight: 400; font-size: 32px; line-height: 40px; }
.delete { width: 109px; height: 47px; padding: 0 0 0 1px; border: 0; border-radius: 8px; background: #e74c3c; color: #fff; font: 700 20px "Liberation Sans", Arial, sans-serif; }
.footer { width: 100%; height: 81px; margin-top: 48px; flex: none; display: flex; align-items: center; justify-content: center; background: #2980b9; color: #ecf0f1; font-size: 21.600px; font-weight: 600; box-shadow: 0 -4px 16px rgba(0, 0, 0, .06); white-space: nowrap; }
.scrollbar { flex: 1; display: flex; flex-direction: column; align-items: center; padding: 12px 2px 11px 0; }
.thumb { width: 13px; height: 483px; margin-top: auto; margin-bottom: 12px; border-radius: 7px; background: #8b8b8b; }

.taskbar { position: relative; height: 72px; margin-top: auto; padding-bottom: 1px; flex: none; display: flex; align-items: center; border-top: 2px solid rgba(90, 60, 60, .3); background: linear-gradient(90deg, #e8d3e4 0, #e8d2e3 360px, #ebd7d9 520px, #efdcca 690px, #f7e9c6 810px, #f9e9cc 1000px, #f4ddd0 1220px, #efd6d3 1440px, #ecdad2 1560px, #ebd7d2 1700px, #e9d5d6 1920px); }
.weather { position: relative; margin-left: 29px; width: 38px; height: 38px; }
.weather b { position: absolute; left: 17px; top: -8px; width: 24px; height: 24px; border-radius: 50%; background: #c42b1c; color: #fff; font: 400 16px/24px "Open Sans", sans-serif; text-align: center; }
.start { margin-left: 311px; }
.search { width: 328px; height: 47px; margin-left: 21px; padding: 0 19px 0 16px; display: flex; align-items: center; border: 1.5px solid rgba(110, 70, 60, .16); border-bottom: 2px solid rgba(90, 60, 50, .32); border-radius: 24px; background: rgba(255, 255, 255, .7); background-clip: padding-box; font-size: 19px; color: #5d5a5a; }
.search span { flex: 1; margin-left: 16px; letter-spacing: .15px; }
.apps { display: flex; margin-left: 3px; align-items: center; }
.app { position: relative; width: 66.200px; height: 58px; display: flex; align-items: center; justify-content: center; }
.open::after { content: ""; position: absolute; left: 50%; bottom: 0; width: 9px; height: 5px; margin-left: -4px; border-radius: 3px; background: #857b72; }
.current::before { content: ""; position: absolute; left: 4.500px; top: 0; width: 57px; height: 58px; border-radius: 7px; background: rgba(255, 255, 255, .55); box-shadow: 0 0 0 1px rgba(120, 80, 50, .1), 0 1px 1px rgba(0, 0, 0, .12); }
.current svg { position: relative; }
.current::after { width: 24px; margin-left: -12px; background: #4d5c6c; }
.count { position: absolute; left: 27px; top: 4px; width: 40px; height: 24px; border-radius: 12px; background: #4d5c6c; color: #fff; font: 400 16.500px/24px "Open Sans", sans-serif; text-align: center; }
.tray { display: flex; align-items: center; margin-left: auto; padding-right: 30px; font-size: 17px; color: #1b1b1b; }
.cloud { margin-left: 27px; }
.lang { margin-left: 30px; }
.wifi { margin-left: 29px; }
.vol { margin-left: 12px; }
.bat { margin-left: 11px; }
.clock { width: 107px; display: flex; flex-direction: column; text-align: right; line-height: 24px; }
.date { letter-spacing: .2px; }
</style>
